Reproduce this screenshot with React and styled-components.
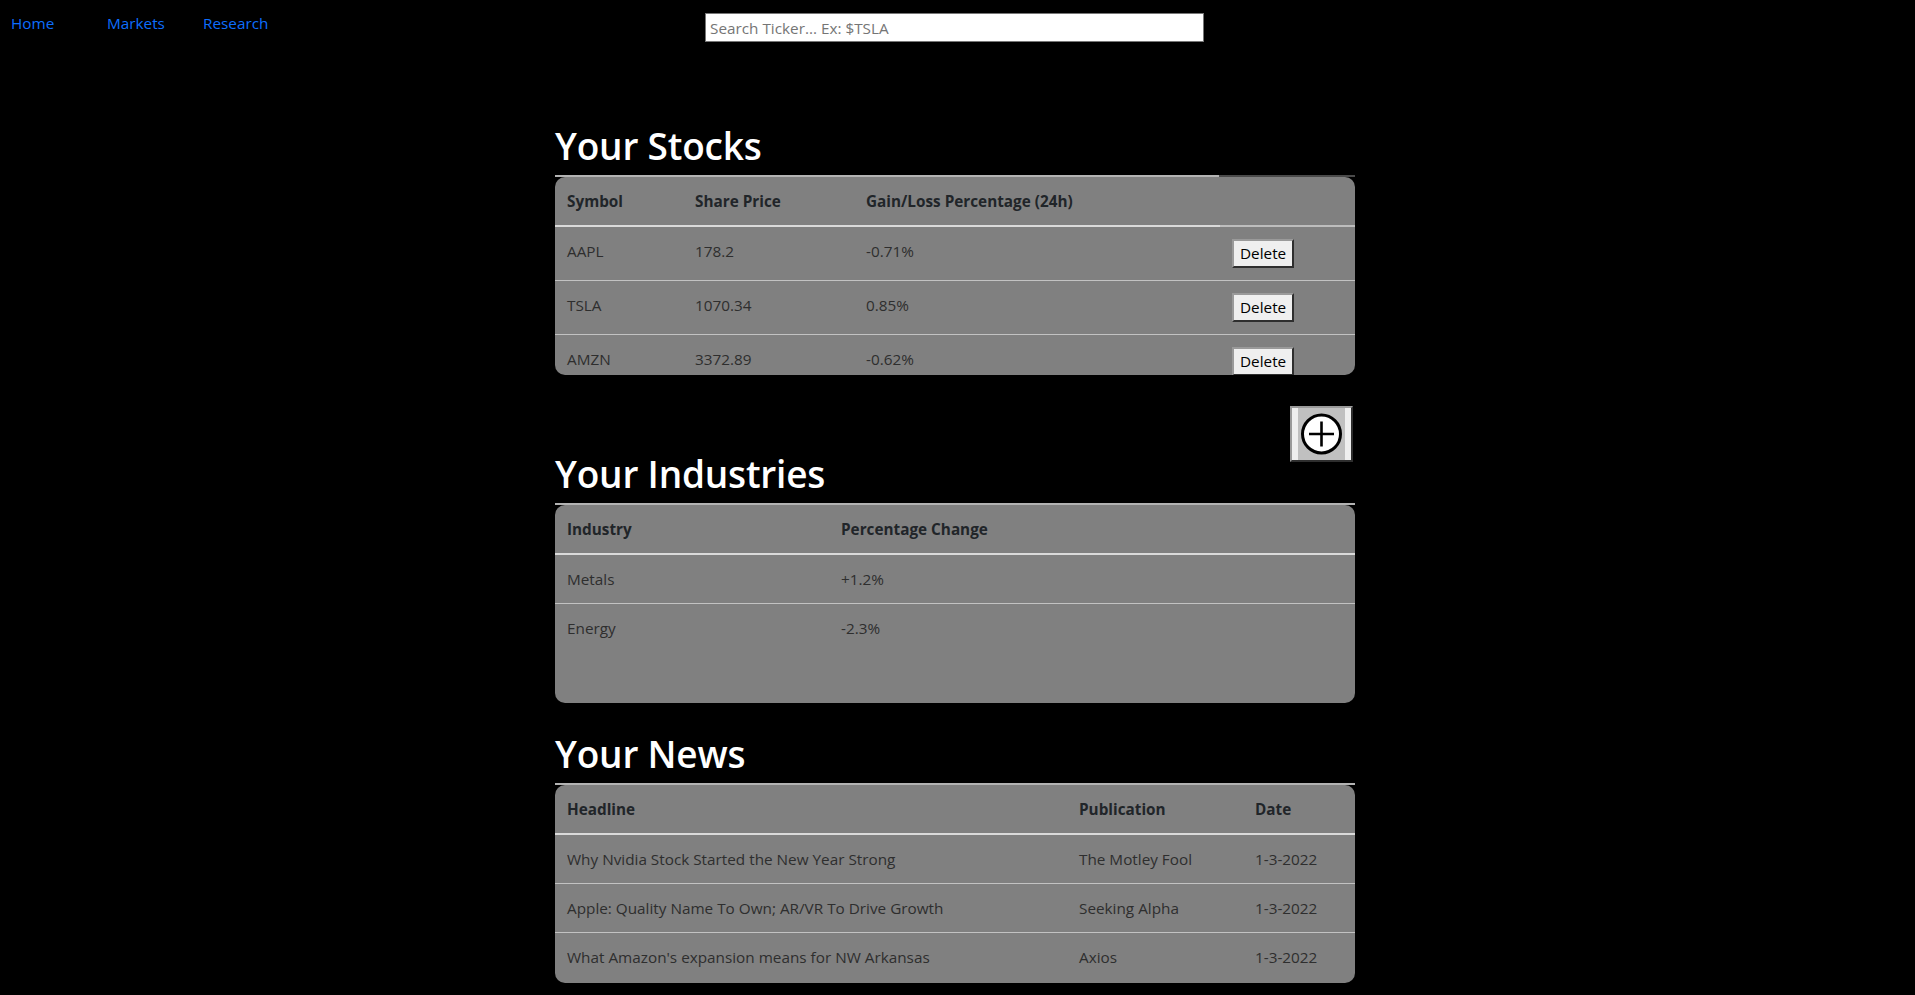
import React from 'react';
import styled, { createGlobalStyle } from 'styled-components';

const GlobalStyle = createGlobalStyle`
  body {
    margin: 0;
    background: #000;
    font-family: 'Open Sans', 'Noto Sans', sans-serif;
    font-size: 15.3px;
    line-height: 24px;
    color: #212529;
  }
  * { box-sizing: border-box; }
`;

const stocks = [
  { symbol: 'AAPL', price: '178.2', change: '-0.71%' },
  { symbol: 'TSLA', price: '1070.34', change: '0.85%' },
  { symbol: 'AMZN', price: '3372.89', change: '-0.62%' },
];

const industries = [
  { name: 'Metals', change: '+1.2%' },
  { name: 'Energy', change: '-2.3%' },
];

const news = [
  { headline: 'Why Nvidia Stock Started the New Year Strong', pub: 'The Motley Fool', date: '1-3-2022' },
  { headline: 'Apple: Quality Name To Own; AR/VR To Drive Growth', pub: 'Seeking Alpha', date: '1-3-2022' },
  { headline: "What Amazon's expansion means for NW Arkansas", pub: 'Axios', date: '1-3-2022' },
];

const TopBar = styled.header`
  display: flex;
  align-items: flex-start;
  padding: 11px 0 0 11px;
`;

const NavLinks = styled.nav`
  display: flex;
`;

const NavLink = styled.a`
  width: 96px;
  color: #0d6efd;
  text-decoration: none;
  cursor: pointer;
`;

const Search = styled.input`
  margin: 2px 0 0 406px;
  width: 499px;
  height: 29px;
  padding: 1px 4px;
  border: 1px solid #767676;
  background: #fff;
  font-family: inherit;
  font-size: 15.3px;
  &::placeholder {
    color: #757575;
  }
`;

const Main = styled.main`
  width: 805px;
  margin: 0 auto;
  padding: 77px 5px 0 0;
`;

const Section = styled.section`
  margin-top: ${p => p.$gap || 0}px;
`;

const Title = styled.h1`
  margin: 0 0 5px;
  padding-top: 3px;
  font-size: 37px;
  font-weight: 600;
  line-height: 48px;
  letter-spacing: -0.2px;
  color: #fff;
`;

const Frame = styled.div`
  padding-top: 2px;
  background: ${p =>
      p.$split
        ? 'linear-gradient(to right, #b3b3b3 664px, #4a4a4a 664px)'
        : 'linear-gradient(#b3b3b3, #b3b3b3)'}
    top left / 100% 2px no-repeat;
`;

const Panel = styled.div`
  height: 198px;
  background: #808080;
  border-radius: 10px;
  overflow: hidden;
`;

const Table = styled.table`
  width: 100%;
  border-collapse: collapse;
  table-layout: fixed;
`;

const Th = styled.th`
  padding: 12px;
  text-align: left;
  font-weight: 700;
  color: #212529;
  border-bottom: 2px solid ${p => (p.$empty ? '#bdbdbd' : '#dadada')};
`;

const Row = styled.tr`
  border-bottom: 1px solid #c2c2c2;
  &:last-child {
    border-bottom: none;
  }
`;

const Td = styled.td`
  padding: 12px;
  vertical-align: top;
  color: #2e2e2e;
  white-space: nowrap;
`;

const ClassicButton = styled.button`
  display: inline-flex;
  align-items: center;
  justify-content: center;
  padding: ${p => (p.$icon ? '0 6px' : '1px 6px')};
  border: 2px solid;
  border-color: #9a9a9a #2e2e2e #2e2e2e #9a9a9a;
  background: #efefef;
  font-family: inherit;
  font-size: 15.3px;
  line-height: 23px;
  color: #000;
  cursor: pointer;
`;

const AddRow = styled.div`
  display: flex;
  align-items: flex-start;
  justify-content: flex-end;
  height: 72px;
  padding: 31px 2px 0 0;
`;

const PlusIcon = () => (
  <svg width="47" height="52" viewBox="0 0 47 52">
    <rect width="47" height="52" fill="#c0c0c0" />
    <circle cx="23.5" cy="26" r="19" fill="#fff" stroke="#000" strokeWidth="3" />
    <path d="M23.5 13.5v25M11 26h25" stroke="#000" strokeWidth="2.6" />
  </svg>
);

const App = () => {
  return (
    <>
      <GlobalStyle />
      <TopBar>
        <NavLinks>
          <NavLink>Home</NavLink>
          <NavLink>Markets</NavLink>
          <NavLink>Research</NavLink>
        </NavLinks>
        <Search placeholder="Search Ticker... Ex: $TSLA" />
      </TopBar>

      <Main>
        <Section>
          <Title>Your Stocks</Title>
          <Frame $split>
            <Panel>
              <Table>
                <colgroup>
                  <col style={{ width: 128 }} />
                  <col style={{ width: 171 }} />
                  <col style={{ width: 366 }} />
                  <col style={{ width: 135 }} />
                </colgroup>
                <thead>
                  <tr>
                    <Th>Symbol</Th>
                    <Th>Share Price</Th>
                    <Th>Gain/Loss Percentage (24h)</Th>
                    <Th $empty></Th>
                  </tr>
                </thead>
                <tbody>
                  {stocks.map(s => (
                    <Row key={s.symbol}>
                      <Td>{s.symbol}</Td>
                      <Td>{s.price}</Td>
                      <Td>{s.change}</Td>
                      <Td>
                        <ClassicButton>Delete</ClassicButton>
                      </Td>
                    </Row>
                  ))}
                </tbody>
              </Table>
            </Panel>
          </Frame>
        </Section>

        <AddRow>
          <ClassicButton $icon aria-label="Add stock">
            <PlusIcon />
          </ClassicButton>
        </AddRow>

        <Section>
          <Title>Your Industries</Title>
          <Frame>
            <Panel>
              <Table>
                <colgroup>
                  <col style={{ width: 274 }} />
                  <col style={{ width: 526 }} />
                </colgroup>
                <thead>
                  <tr>
                    <Th>Industry</Th>
                    <Th>Percentage Change</Th>
                  </tr>
                </thead>
                <tbody>
                  {industries.map(i => (
                    <Row key={i.name}>
                      <Td>{i.name}</Td>
                      <Td>{i.change}</Td>
                    </Row>
                  ))}
                </tbody>
              </Table>
            </Panel>
          </Frame>
        </Section>

        <Section $gap={24}>
          <Title>Your News</Title>
          <Frame>
            <Panel>
              <Table>
                <colgroup>
                  <col style={{ width: 512 }} />
                  <col style={{ width: 176 }} />
                  <col style={{ width: 112 }} />
                </colgroup>
                <thead>
                  <tr>
                    <Th>Headline</Th>
                    <Th>Publication</Th>
                    <Th>Date</Th>
                  </tr>
                </thead>
                <tbody>
                  {news.map(n => (
                    <Row key={n.headline}>
                      <Td>{n.headline}</Td>
                      <Td>{n.pub}</Td>
                      <Td>{n.date}</Td>
                    </Row>
                  ))}
                </tbody>
              </Table>
            </Panel>
          </Frame>
        </Section>
      </Main>
    </>
  );
};

export default App;
